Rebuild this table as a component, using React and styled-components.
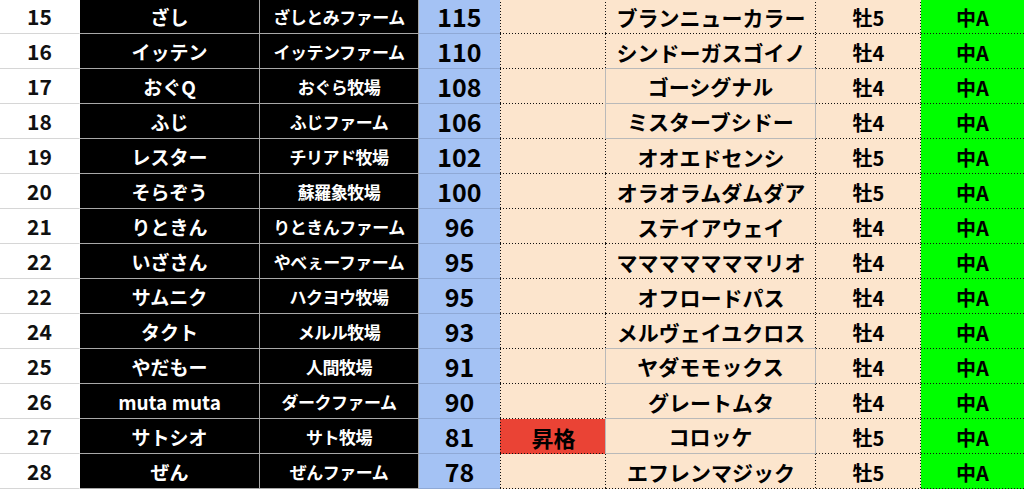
import React from 'react';
import styled, { createGlobalStyle, css } from 'styled-components';

// ranking rows
const rows = [
  { rank: 15, owner: 'ざし', farm: 'ざしとみファーム', pt: 115, horse: 'ブランニューカラー', sex: '牡5' },
  { rank: 16, owner: 'イッテン', farm: 'イッテンファーム', pt: 110, horse: 'シンドーガスゴイノ', sex: '牡4' },
  { rank: 17, owner: 'おぐQ', farm: 'おぐら牧場', pt: 108, horse: 'ゴーシグナル', sex: '牡4', boxed: true },
  { rank: 18, owner: 'ふじ', farm: 'ふじファーム', pt: 106, horse: 'ミスターブシドー', sex: '牡4', boxed: true },
  { rank: 19, owner: 'レスター', farm: 'チリアド牧場', pt: 102, horse: 'オオエドセンシ', sex: '牡5' },
  { rank: 20, owner: 'そらぞう', farm: '蘇羅象牧場', pt: 100, horse: 'オラオラムダムダア', sex: '牡5' },
  { rank: 21, owner: 'りときん', farm: 'りときんファーム', pt: 96, horse: 'ステイアウェイ', sex: '牡4' },
  { rank: 22, owner: 'いざさん', farm: 'やべぇーファーム', pt: 95, horse: 'マママママママリオ', sex: '牡4' },
  { rank: 22, owner: 'サムニク', farm: 'ハクヨウ牧場', pt: 95, horse: 'オフロードパス', sex: '牡4' },
  { rank: 24, owner: 'タクト', farm: 'メルル牧場', pt: 93, horse: 'メルヴェイユクロス', sex: '牡4' },
  { rank: 25, owner: 'やだもー', farm: '人間牧場', pt: 91, horse: 'ヤダモモックス', sex: '牡4', boxed: true },
  { rank: 26, owner: 'muta muta', farm: 'ダークファーム', pt: 90, horse: 'グレートムタ', sex: '牡4' },
  { rank: 27, owner: 'サトシオ', farm: 'サト牧場', pt: 81, horse: 'コロッケ', sex: '牡5', boxed: true, promo: '昇格' },
  { rank: 28, owner: 'ぜん', farm: 'ぜんファーム', pt: 78, horse: 'エフレンマジック', sex: '牡5' },
];

const GlobalStyle = createGlobalStyle`
  html, body {
    margin: 0;
    padding: 0;
    background: #fff;
    overflow: hidden;
  }
  body {
    font-family: "Noto Sans CJK JP", "Noto Sans", sans-serif;
  }
`;

const Sheet = styled.div`
  display: grid;
  grid-template-columns: 80px 180px 159px 82px 105px 210px 105px 103px;
  grid-auto-rows: 35px;
  margin-top: -1px;
  width: 1024px;
`;

const Cell = styled.div`
  box-sizing: border-box;
  display: flex;
  align-items: center;
  justify-content: center;
  padding-top: 2px;
  font-weight: 700;
  white-space: nowrap;
  border-right: 1px solid transparent;
  border-bottom: 1px solid transparent;
  line-height: 1.1;
`;

// excel style hairline dots drawn on the bottom / right edges
const dotH = 'repeating-linear-gradient(to right, #111 0 1px, transparent 1px 3px)';
const dotV = 'repeating-linear-gradient(to bottom, #111 0 1px, transparent 1px 3px)';
const dots = (right = true) => css`
  border: none;
  background-image: ${right ? `${dotH}, ${dotV}` : dotH};
  background-repeat: no-repeat;
  background-size: ${right ? '100% 1px, 1px 100%' : '100% 1px'};
  background-position: ${right ? 'left bottom, right top' : 'left bottom'};
`;

const RankCell = styled(Cell)`
  background: #fff;
  color: #111;
  font-size: 21px;
  border-bottom-color: #d6d6d6;
  border-right-color: #fff;
`;

const DarkCell = styled(Cell)`
  background: #000;
  color: #fff;
  font-size: ${(p) => (p.$small ? '17px' : '19px')};
  letter-spacing: ${(p) => (p.$small ? '-0.5px' : '0')};
  border-color: #a8a8a8;
`;

const PointCell = styled(Cell)`
  background-color: #a4c2f4;
  color: #000;
  font-size: 25px;
  border-bottom-color: #8fa9d6;
`;

const PromoCell = styled(Cell)`
  background-color: ${(p) => (p.$promo ? '#ea4335' : '#fce5cd')};
  ${dots()};
  border-left: 1px solid transparent;
  background-image: ${dotH}, ${dotV}, ${dotV};
  background-size: 100% 1px, 1px 100%, 1px 100%;
  background-position: left bottom, right top, left top;
  background-origin: border-box;
  margin-left: -1px;
  color: #000;
  font-size: 22px;
`;

const HorseCell = styled(Cell)`
  background-color: #fce5cd;
  ${dots()};
  color: #000;
  font-size: 21px;
  ${(p) =>
    p.$boxed &&
    css`
      background-image: none;
      border-right: 1px solid #b9b9b9;
      border-bottom: 1px solid #b9b9b9;
      box-shadow: -1px 0 0 #b9b9b9, 0 -1px 0 #b9b9b9, -1px -1px 0 #b9b9b9;
    `}
`;

const SexCell = styled(Cell)`
  background-color: #fce5cd;
  ${dots()};
  color: #000;
  font-size: 20px;
`;

const ClassCell = styled(Cell)`
  background-color: #00ff00;
  ${dots(false)};
  color: #000;
  font-size: 20px;
`;

export default function App() {
  return (
    <>
      <GlobalStyle />
      <Sheet>
        {rows.map((r, i) => (
          <React.Fragment key={i}>
            <RankCell>{r.rank}</RankCell>
            <DarkCell>{r.owner}</DarkCell>
            <DarkCell $small>{r.farm}</DarkCell>
            <PointCell>{r.pt}</PointCell>
            <PromoCell $promo={!!r.promo}>{r.promo}</PromoCell>
            <HorseCell $boxed={r.boxed}>{r.horse}</HorseCell>
            <SexCell>{r.sex}</SexCell>
            <ClassCell>中A</ClassCell>
          </React.Fragment>
        ))}
      </Sheet>
    </>
  );
}
